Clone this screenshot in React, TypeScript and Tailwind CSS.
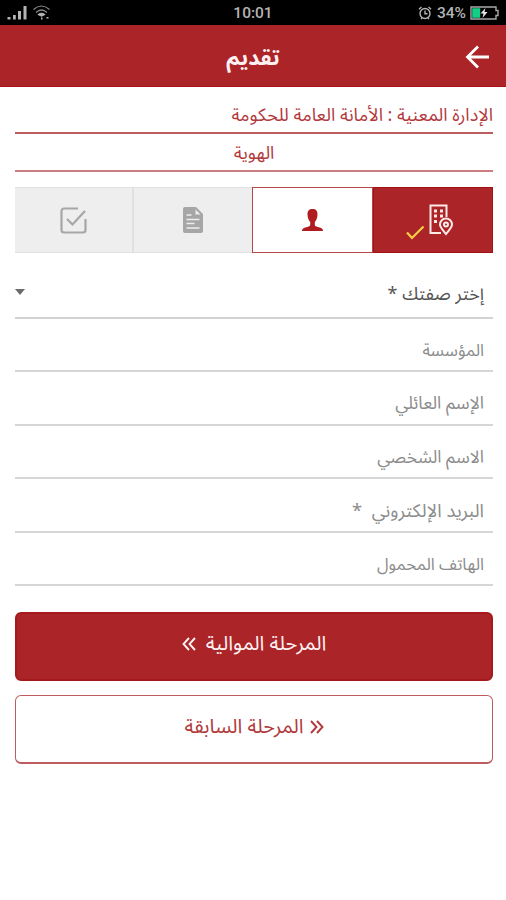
import React from 'react';

const fields = [
  { label: 'المؤسسة', style: 'h-[53px] text-[16.8px]' },
  { label: 'الإسم العائلي', style: 'h-[54px] text-[17.6px]' },
  { label: 'الاسم الشخصي', style: 'h-[53px] text-[17.5px]' },
  { label: 'البريد الإلكتروني  *', style: 'h-[54px] text-[18.4px]' },
  { label: 'الهاتف المحمول', style: 'h-[53px] text-[16.7px]' },
];

function StatusBar() {
  return (
    <div dir="ltr" className="grid h-[25px] grid-cols-3 items-center bg-black px-[7px] font-[Roboto,sans-serif] text-[16px] font-medium text-[#b4b4b4]">
      <div className="flex items-center gap-[6px]">
        <svg width="20" height="15" viewBox="0 0 20 15" fill="#b4b4b4">
          <path d="M.5 12h3v2.500h-3zM6 10h2.800v4.500H6zM11 6h3v8.500h-3zM16.500 1h3v13.500h-3z" />
        </svg>
        <svg width="17" height="15" viewBox="0 0 17 15" fill="none" stroke="#b4b4b4" strokeWidth="1.200">
          <path d="M.5 4.500Q8.500-2.500 16.500 4.500M3 7.500Q8.500 2.500 14 7.500" stroke="#8c8c8c" />
          <path d="M5.500 9.500Q8.500 7 11.500 9.500L8.500 11z" fill="#b4b4b4" />
          <path d="M8 13.500h1.500M14.500 12v1.500" strokeWidth="2" />
        </svg>
      </div>
      <div className="pt-[2px] text-center text-[15.5px]">10:01</div>
      <div className="flex items-center justify-end gap-[5px]">
        <svg width="14" height="14" viewBox="0 0 13 14" fill="none" stroke="#b4b4b4" strokeWidth="1.400">
          <circle cx="6.500" cy="7.500" r="5" />
          <path d="M6.500 4.500v3.300h2.500M.5 3.300 3 1M12.500 3.300 10 1M2.500 13l1-1M10.500 13l-1-1" />
        </svg>
        <span className="-mr-[1px] pt-[2px] text-[15.5px]">34%</span>
        <svg width="29" height="14" viewBox="0 0 29 14">
          <path d="M1 1h25v3.500h2v5h-2V13H1z" fill="none" stroke="#a8a8a8" strokeWidth="1.400" />
          <path d="M2.200 2.200h8v9.600h-8z" fill="#12cf88" />
          <path d="M15.500 2 10.500 7.500h3L12.500 12l5-6h-3z" fill="#e8e8e8" />
        </svg>
      </div>
    </div>
  );
}

function Header() {
  return (
    <header className="relative flex h-[62px] items-center justify-center border-b border-[#a61418] bg-[#ab2427] pt-[4px]">
      <h1 className="text-[21.5px] leading-[30px] font-bold text-[#fff1f1]">تقديم</h1>
      <svg className="absolute top-[20px] right-[16px]" width="25" height="24" viewBox="0 0 25 24" fill="none" stroke="#fff" strokeWidth="2.800">
        <path d="M13 1.500 2.500 12 13 22.500M2.500 12H24" />
      </svg>
    </header>
  );
}

function Steps() {
  return (
    <div dir="ltr" className="flex h-[66px]">
      <div className="flex w-[119px] items-center justify-center border-y border-r-2 border-[#e0e0e0] bg-[#eee]">
        <svg width="27" height="27" viewBox="0 0 27 27" fill="none" stroke="#a6a6a6" strokeWidth="2.200">
          <path d="M18 1.500H4a2.500 2.500 0 0 0-2.500 2.500v19A2.500 2.500 0 0 0 4 25.500h19a2.500 2.500 0 0 0 2.500-2.500V12M7 12l5.500 5.500L25 4" />
        </svg>
      </div>
      <div className="flex w-[118px] items-center justify-center border-y border-[#e0e0e0] bg-[#eee]">
        <svg width="20" height="26" viewBox="0 0 20 26" fill="#a6a6a6">
          <path d="M2 0h11l7 7V24a2 2 0 0 1-2 2H2a2 2 0 0 1-2-2V2a2 2 0 0 1 2-2z" />
          <path d="M12.500 2.500V7.500H17.500z" fill="#eee" />
          <path d="M3.500 8h5M3.500 12.500h13M3.500 16.500h8M3.500 21h13" stroke="#eee" strokeWidth="1.300" />
        </svg>
      </div>
      <div className="flex w-[121px] items-center justify-center border border-[#b5484a] bg-white">
        <svg width="21" height="22" viewBox="0 0 21 22" fill="#b01d20">
          <path d="M10.500 0C7 0 5.300 2 5.500 5.500c.1 3 1 5.800 2.700 7.500v3c0 1.200-1.400 1.600-4 2.300C1.600 19 0 19.700 0 22h21c0-2.300-1.600-3-4.200-3.700-2.600-.7-4-1.100-4-2.300v-3c1.700-1.700 2.600-4.500 2.700-7.500C15.700 2 14 0 10.500 0z" />
        </svg>
      </div>
      <div className="flex w-[120px] justify-center border border-[#a31316] bg-[#ab2427] pr-[7px]">
        <svg className="mt-[37px]" width="19" height="15" viewBox="0 0 19 15" fill="none" stroke="#f7ce46" strokeWidth="2.200">
          <path d="M1 7.500 6 13 17.500 1.500" />
        </svg>
        <svg className="mt-[16px] ml-[4px]" width="24" height="32" viewBox="0 0 24 32" fill="none" stroke="#ffeaea" strokeWidth="2">
          <path d="M12 29H1.500V1.500h16V13" />
          <path d="M5 7h3M11 7h3M5 12h3M11 12h3M5 17.500h3" strokeWidth="3" />
          <path d="M17 30c-3-4-6-6.500-6-9.500a6 6 0 0 1 12 0c0 3-3 5.500-6 9.500z" fill="#ab2427" />
          <circle cx="17" cy="20.500" r="2" />
        </svg>
      </div>
    </div>
  );
}

function Chevrons({ right = false }: { right?: boolean }) {
  return (
    <svg className={right ? 'rotate-180' : ''} width="14" height="14" viewBox="0 0 14 14" fill="none" stroke="currentColor" strokeWidth="1.900">
      <path d="M7 1 1.500 7 7 13M13 1 7.500 7 13 13" />
    </svg>
  );
}

export default function App() {
  return (
    <div dir="rtl" className="h-[900px] w-[506px] overflow-hidden bg-white font-['Noto_Sans_Arabic','DejaVu_Sans',sans-serif]">
      <StatusBar />
      <Header />
      <main className="pr-[13px] pl-[15px]">
        <div className="flex h-[47px] items-center border-b-2 border-[#bd5c5f] pt-[12px] text-[18px] whitespace-nowrap text-[#b23a3d]">
          <span>الإدارة المعنية : الأمانة العامة للحكومة</span>
        </div>
        <div className="mb-[15px] flex h-[38px] items-center justify-center border-b-2 border-[#cb7d7f] pt-[2px] text-[18px] text-[#b23a3d]">
          <span>الهوية</span>
        </div>
        <Steps />
        <div className="flex h-[66px] items-center justify-between border-b-2 border-[#d2d2d2] pt-[18px] pr-[9px] text-[18px] text-[#555]">
          <span>إختر صفتك *</span>
          <svg className="mb-[4px]" width="10" height="6" viewBox="0 0 10 6" fill="#6b6b6b"><path d="M0 0h10L5 6z" /></svg>
        </div>
        {fields.map((f) => (
          <div key={f.label} className={`flex items-center border-b-2 border-[#d6d6d6] pt-[13px] pr-[9px] whitespace-pre text-[#8c8c8c] ${f.style}`}>
            <span>{f.label}</span>
          </div>
        ))}
        <button className="mt-[26px] flex h-[69px] w-full items-center justify-center gap-[10px] rounded-[6px] border-2 border-[#a61a1d] bg-[#ab2427] pb-[5px] text-[20.2px] text-[#fff1f1]">
          <span>المرحلة الموالية</span>
          <Chevrons />
        </button>
        <button className="mt-[14px] flex h-[69px] w-full items-center justify-center gap-[6px] rounded-[6px] border border-b-2 border-[#bd5c5f] pb-[5px] text-[20px] text-[#b23a3d]">
          <Chevrons right />
          <span>المرحلة السابقة</span>
        </button>
      </main>
    </div>
  );
}
